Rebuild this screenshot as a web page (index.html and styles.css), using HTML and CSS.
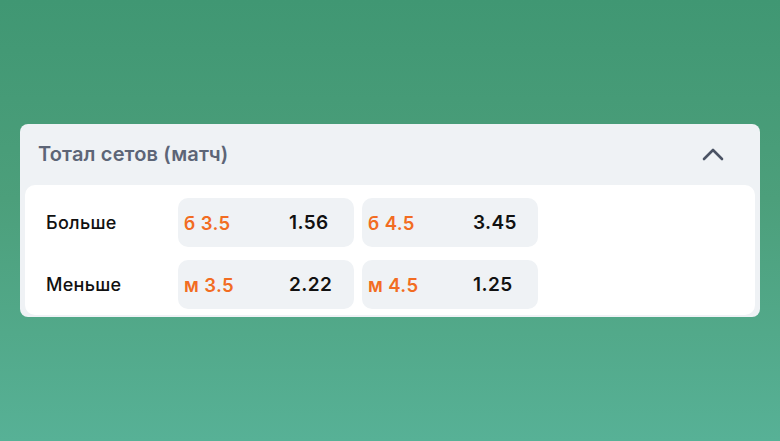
FILE: index.html
```html
<!DOCTYPE html>
<html lang="ru">
<head>
<meta charset="utf-8">
<link rel="stylesheet" href="styles.css">
</head>
<body>
<div class="card">
  <div class="card-header">
    <span class="title">Тотал сетов (матч)</span>
    <svg class="chevron" width="22" height="14" viewBox="0 0 22 14">
      <path d="M2 12 L11 3 L20 12" fill="none" stroke="#4b5364" stroke-width="2.6" stroke-linecap="round" stroke-linejoin="round"/>
    </svg>
  </div>
  <div class="card-body">
    <div class="grid">
      <div class="label">Больше</div>
      <div class="cell"><span class="line">б 3.5</span><span class="odd">1.56</span></div>
      <div class="cell"><span class="line">б 4.5</span><span class="odd">3.45</span></div>
      <div class="label">Меньше</div>
      <div class="cell"><span class="line">м 3.5</span><span class="odd">2.22</span></div>
      <div class="cell"><span class="line">м 4.5</span><span class="odd">1.25</span></div>
    </div>
  </div>
</div>
</body>
</html>
```

FILE: styles.css
```css
html, body {
  margin: 0;
  padding: 0;
}
body {
  width: 780px;
  height: 441px;
  background: linear-gradient(180deg, #409773 0%, #4c9f7b 45%, #57b196 100%);
  font-family: Inter, "Noto Sans", sans-serif;
  overflow: hidden;
}
.card {
  margin: 124px 0 0 20px;
  width: 740px;
  background: #eff2f5;
  border-radius: 8px;
  padding-bottom: 2px;
}
.card-header {
  height: 61px;
  display: flex;
  align-items: center;
  justify-content: space-between;
  padding: 0 36px 0 18px;
}
.title {
  font-size: 20px;
  font-weight: 600;
  color: #5d6577;
  letter-spacing: 0.15px;
  position: relative;
  top: -1px;
}
.chevron {
  display: block;
  position: relative;
  top: -1px;
}
.card-body {
  margin: 0 5px;
  background: #ffffff;
  border-radius: 10px;
  padding: 13px 0 6px 21px;
}
.grid {
  display: grid;
  grid-template-columns: 124px 176px 176px;
  column-gap: 8px;
  row-gap: 13px;
  align-items: center;
}
.label {
  font-size: 18px;
  font-weight: 500;
  color: #111111;
  letter-spacing: 0.3px;
}
.cell {
  height: 49px;
  background: #eff2f5;
  border-radius: 10px;
  display: flex;
  align-items: center;
  padding-left: 6px;
}
.line {
  width: 105px;
  font-size: 18.5px;
  font-weight: 600;
  color: #f26c22;
  letter-spacing: 0.4px;
}
.odd {
  font-size: 19px;
  font-weight: 600;
  color: #111111;
  letter-spacing: 0.4px;
}
```
